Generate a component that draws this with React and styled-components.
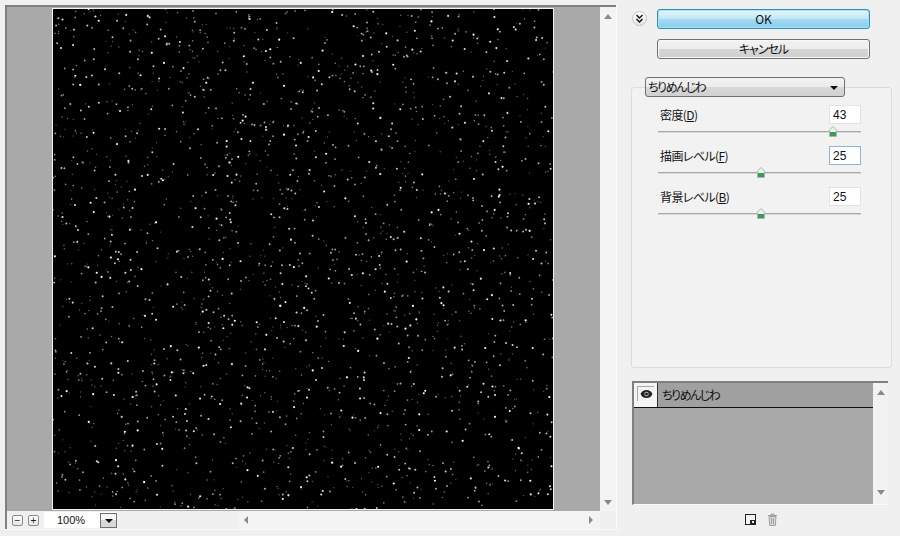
import { useMemo } from "react";
import styled, { createGlobalStyle } from "styled-components";

const GlobalStyle = createGlobalStyle`
  html, body { margin: 0; padding: 0; background: #f0f0f0; overflow: hidden; }
  * { box-sizing: border-box; }
  body {
    font-family: "Noto Sans CJK JP", "Liberation Sans", sans-serif;
    font-size: 12px;
    font-feature-settings: "palt" 1;
    color: #111;
  }
`;

const Page = styled.div`
  width: 900px;
  height: 536px;
  display: flex;
  padding: 5px 0 0 5px;
  background: #f0f0f0;
`;

const PreviewColumn = styled.div`
  width: 612px;
  height: 525px;
  display: flex;
  flex-direction: column;
  border-right: 1px solid #fafafa;
  border-bottom: 1px solid #fafafa;
`;
const PreviewTop = styled.div`
  display: flex;
  height: 506px;
`;
const Viewport = styled.div`
  width: 595px;
  background: #a9a9a9;
  border-top: 2px solid #808080;
  border-left: 2px solid #808080;
  padding: 1px 0 0 45px;
`;
const Canvas = styled.svg`
  display: block;
  width: 502px;
  height: 502px;
  background: #000;
  border: 1px solid #f4f4f4;
`;
const Noise = styled.g`
  filter: blur(0.6px);
`;
const VScroll = styled.div`
  flex: 1;
  background: #f3f3f3;
  border-top: 2px solid #808080;
  display: flex;
  flex-direction: column;
  justify-content: space-between;
  align-items: center;
  padding: 7px 0 6px;
`;
const ArrowUp = styled.span`
  width: 0;
  height: 0;
  border-left: 4px solid transparent;
  border-right: 4px solid transparent;
  border-bottom: 5px solid #8a8a8a;
`;
const ArrowDown = styled(ArrowUp)`
  border-bottom: 0;
  border-top: 5px solid #8a8a8a;
`;
const ArrowLeft = styled.span`
  width: 0;
  height: 0;
  border-top: 4px solid transparent;
  border-bottom: 4px solid transparent;
  border-right: 4px solid #8a8a8a;
`;
const ArrowRight = styled(ArrowLeft)`
  border-right: 0;
  border-left: 4px solid #8a8a8a;
`;

const BottomBar = styled.div`
  flex: 1;
  display: flex;
  align-items: center;
  padding-left: 5px;
  border-left: 2px solid #808080;
`;
const ZoomButton = styled.button`
  width: 11px;
  height: 11px;
  margin-right: 5px;
  padding: 0;
  border: 1px solid #8c8c8c;
  border-radius: 2px;
  background: linear-gradient(#fff, #e4e4e4);
  display: flex;
  align-items: center;
  justify-content: center;
  font: 10px/9px "Liberation Sans", sans-serif;
  color: #222;
`;
const ZoomField = styled.div`
  width: 73px;
  height: 16px;
  background: #fff;
  display: flex;
  align-items: center;
  justify-content: space-between;
  padding-left: 13px;
  font: 11px "Liberation Sans", sans-serif;
`;
const ZoomDrop = styled.div`
  width: 17px;
  height: 15px;
  background: linear-gradient(#f6f6f6 50%, #d8d8d8 50%);
  border: 1px solid #707070;
  display: flex;
  align-items: center;
  justify-content: center;
`;
const DropMark = styled.span`
  width: 0;
  height: 0;
  margin-top: 2px;
  border-left: 4px solid transparent;
  border-right: 4px solid transparent;
  border-top: 4px solid #111;
`;
const HScroll = styled.div`
  width: 361px;
  height: 18px;
  margin-left: auto;
  margin-right: 16px;
  background: #f3f3f3;
  display: flex;
  align-items: center;
  justify-content: space-between;
  padding: 0 7px 0 5px;
`;

const Side = styled.div`
  flex: 1;
  display: flex;
  flex-direction: column;
  padding-top: 4px;
  padding-left: 14px;
`;
const ActionRow = styled.div`
  display: flex;
  align-items: flex-start;
  height: 30px;
  padding-left: ${(p) => p.$indent || 0}px;
`;
const Chevron = styled.button`
  width: 15px;
  height: 15px;
  margin: 2px 10px 0 1px;
  padding: 0;
  border: 1px solid #c4c4c4;
  border-radius: 50%;
  background: linear-gradient(#fff, #e6e6e6);
  display: flex;
  align-items: center;
  justify-content: center;
`;
const DialogButton = styled.button`
  width: 213px;
  height: 20px;
  padding: 0 0 2px;
  border-radius: 3px;
  font: 12px "Noto Sans CJK JP", "Liberation Sans", sans-serif;
  font-feature-settings: "palt" 1;
  letter-spacing: ${(p) => (p.$primary ? 0 : -1)}px;
  color: #111;
  border: 1px solid ${(p) => (p.$primary ? "#2f8fb4" : "#707070")};
  background: ${(p) =>
    p.$primary
      ? "linear-gradient(#e4f5fc 0%, #c4e7f7 48%, #a2d9f3 52%, #8ccdec 100%)"
      : "linear-gradient(#f3f3f3 0%, #ececec 48%, #d6d6d6 52%, #cfcfcf 100%)"};
  box-shadow: ${(p) => (p.$primary ? "inset 0 0 0 1px #a6e2f7" : "inset 0 0 0 1px #f8f8f8")};
  display: flex;
  align-items: center;
  justify-content: center;
`;
const Settings = styled.section`
  width: 261px;
  height: 281px;
  margin-top: 18px;
  border: 1px solid #dcdcdc;
  border-radius: 3px;
  background: #f2f2f2;
  padding: 0 0 0 26px;
`;
const FilterSelect = styled.div`
  width: 200px;
  height: 20px;
  margin: -11px 0 8px -13px;
  padding: 0 6px 1px 2px;
  border: 1px solid #707070;
  border-radius: 3px;
  background: linear-gradient(#f2f2f2 0%, #ececec 48%, #d8d8d8 52%, #d0d0d0 100%);
  display: flex;
  align-items: center;
  justify-content: space-between;
  letter-spacing: -1.500px;
`;
const ParamBlock = styled.div`
  width: 204px;
  height: 41px;
  display: flex;
  flex-direction: column;
`;
const ParamRow = styled.div`
  display: flex;
  justify-content: space-between;
  align-items: center;
  height: 19px;
  padding-left: 2px;
`;
const Label = styled.label`
  line-height: 16px;
  letter-spacing: -0.600px;
  u { text-underline-offset: 1px; }
`;
const ValueField = styled.div`
  width: 32px;
  height: 19px;
  margin-right: 1px;
  padding-left: 3px;
  background: #fff;
  border: 1px solid ${(p) => (p.$focused ? "#8fb5d6" : "#e3e3e3")};
  font: 12px/18px "Liberation Sans", sans-serif;
`;
const Track = styled.div`
  position: relative;
  height: 2px;
  margin-top: 7px;
  width: 203px;
  background: #a8a8a8;
  border-radius: 1px;
  border-bottom: 1px solid #d8d8d8;
`;
const Thumb = styled.svg`
  position: absolute;
  top: -5px;
  left: ${(p) => p.$at}px;
  width: 8px;
  height: 11px;
`;

const LayerPanel = styled.div`
  width: 256px;
  height: 124px;
  margin: 13px 0 0 1px;
  display: flex;
  border-top: 2px solid #808080;
  border-left: 2px solid #808080;
  border-bottom: 1px solid #fafafa;
`;
const LayerList = styled.div`
  width: 239px;
  background: #a9a9a9;
`;
const LayerRow = styled.div`
  height: 25px;
  display: flex;
  align-items: center;
  padding-bottom: 1px;
  background: #a0a0a0;
  border-bottom: 1px solid #111;
  letter-spacing: -1.500px;
`;
const EyeCell = styled.div`
  width: 24px;
  height: 24px;
  margin: 1px 4px 0 0;
  padding: 3px 0 0 3px;
  background: #f4f4f4;
  border-right: 1px solid #333;
`;
const EyeFrame = styled.div`
  width: 17px;
  height: 15px;
  border-top: 1px solid #a8a8a8;
  border-left: 1px solid #a8a8a8;
  display: flex;
  align-items: center;
  justify-content: center;
`;
const LayerScroll = styled(VScroll)`
  border-top: 0;
  padding: 7px 0 9px;
  background: #f2f2f2;
`;
const IconRow = styled.div`
  display: flex;
  justify-content: center;
  align-items: center;
  gap: 11px;
  width: 256px;
  margin-top: 8px;
  padding-left: 4px;
`;

// same seed every render so the noise stays put
function makeDots(count) {
  let seed = 43;
  const next = () => {
    seed = (seed * 16807) % 2147483647;
    return seed / 2147483647;
  };
  const dots = [];
  for (let i = 0; i < count; i++) {
    const v = next();
    const level = Math.round(90 + 165 * v * v);
    dots.push({
      x: next() * 500,
      y: next() * 500,
      r: 0.6 + v * 0.5,
      c: `rgb(${level},${level},${level})`,
    });
  }
  return dots;
}

function SliderThumb({ at }) {
  return (
    <Thumb $at={at} viewBox="0 0 8 11">
      <path d="M4 .5 7.500 4v6.500h-7V4z" fill="#e8f3ea" stroke="#a9b8ac" />
      <path d="M1 6h6v4H1z" fill="#3d9a56" />
    </Thumb>
  );
}

function Param({ label, keyName, value, at, focused }) {
  return (
    <ParamBlock>
      <ParamRow>
        <Label>
          {label}(<u>{keyName}</u>)
        </Label>
        <ValueField $focused={focused}>{value}</ValueField>
      </ParamRow>
      <Track>
        <SliderThumb at={at} />
      </Track>
    </ParamBlock>
  );
}

export default function App() {
  const dots = useMemo(() => makeDots(2300), []);

  return (
    <Page>
      <GlobalStyle />
      <PreviewColumn>
        <PreviewTop>
          <Viewport>
            <Canvas viewBox="0 0 500 500">
              <Noise>
                {dots.map((d, i) => (
                  <circle key={i} cx={d.x} cy={d.y} r={d.r} fill={d.c} />
                ))}
              </Noise>
            </Canvas>
          </Viewport>
          <VScroll>
            <ArrowUp />
            <ArrowDown />
          </VScroll>
        </PreviewTop>
        <BottomBar>
          <ZoomButton>−</ZoomButton>
          <ZoomButton>+</ZoomButton>
          <ZoomField>
            100%
            <ZoomDrop>
              <DropMark />
            </ZoomDrop>
          </ZoomField>
          <HScroll>
            <ArrowLeft />
            <ArrowRight />
          </HScroll>
        </BottomBar>
      </PreviewColumn>

      <Side>
        <ActionRow>
          <Chevron>
            <svg width="9" height="9" viewBox="0 0 9 9" fill="none" stroke="#111" strokeWidth="1.4">
              <path d="M1.500 1 4.500 4 7.500 1M1.500 5 4.500 8 7.500 5" />
            </svg>
          </Chevron>
          <DialogButton $primary>OK</DialogButton>
        </ActionRow>
        <ActionRow $indent={26}>
          <DialogButton>キャンセル</DialogButton>
        </ActionRow>

        <Settings>
          <FilterSelect>
            ちりめんじわ
            <DropMark />
          </FilterSelect>
          <Param label="密度" keyName="D" value="43" at={171} />
          <Param label="描画レベル" keyName="F" value="25" at={99} focused />
          <Param label="背景レベル" keyName="B" value="25" at={99} />
        </Settings>

        <LayerPanel>
          <LayerList>
            <LayerRow>
              <EyeCell>
                <EyeFrame>
                  <svg width="13" height="10" viewBox="0 0 13 10">
                    <path d="M.5 5C2 2 4 1 6.500 1S11 2 12.500 5C11 8 9 9 6.500 9S2 8 .5 5z" fill="#222" />
                    <circle cx="6.500" cy="5" r="2.200" fill="#bbb" />
                    <circle cx="6.500" cy="5" r="1.300" fill="#111" />
                  </svg>
                </EyeFrame>
              </EyeCell>
              ちりめんじわ
            </LayerRow>
          </LayerList>
          <LayerScroll>
            <ArrowUp />
            <ArrowDown />
          </LayerScroll>
        </LayerPanel>

        <IconRow>
          <svg width="11" height="11" viewBox="0 0 11 11">
            <rect x=".5" y=".5" width="10" height="10" fill="#f4f4f4" stroke="#222" />
            <path d="M5 6h5v4H5z" fill="#222" />
            <path d="M7 7h2v2H7z" fill="#eee" />
          </svg>
          <svg width="11" height="13" viewBox="0 0 11 13" fill="#d8d8d8" stroke="#a0a0a0">
            <path d="M1 2.500h9M4 2.500V1h3v1.500" />
            <path d="M2 3.500h7l-.7 9H2.700z" />
            <path d="M4.500 5v6M6.500 5v6" />
          </svg>
        </IconRow>
      </Side>
    </Page>
  );
}
